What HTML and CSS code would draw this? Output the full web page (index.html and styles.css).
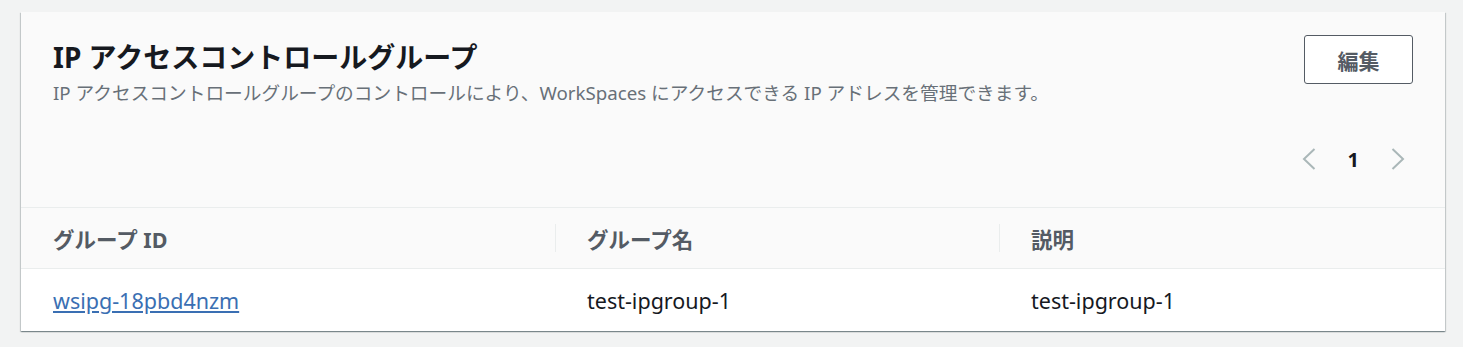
FILE: index.html
```html
<!DOCTYPE html>
<html lang="ja">
<head>
    <meta charset="UTF-8">
    <title>IP アクセスコントロールグループ</title>
    <link rel="stylesheet" href="styles.css">
</head>
<body>
    <div class="panel">
        <div class="panel-header">
            <div class="heading">
                <h2>IP アクセスコントロールグループ</h2>
                <p class="desc">IP アクセスコントロールグループのコントロールにより、WorkSpaces にアクセスできる IP アドレスを管理できます。</p>
            </div>
            <div class="actions">
                <button class="edit-btn">編集</button>
                <div class="pager">
                    <span class="chev">
                        <svg width="14" height="22" viewBox="0 0 14 22"><polyline points="12.5,1 2,11 12.5,21" fill="none" stroke="currentColor" stroke-width="2"/></svg>
                    </span>
                    <span class="page-num">1</span>
                    <span class="chev">
                        <svg width="14" height="22" viewBox="0 0 14 22"><polyline points="1.5,1 12,11 1.5,21" fill="none" stroke="currentColor" stroke-width="2"/></svg>
                    </span>
                </div>
            </div>
        </div>

        <div class="table">
            <div class="th">グループ ID</div>
            <div class="th sep">グループ名</div>
            <div class="th sep">説明</div>

            <div class="td"><a href="#">wsipg-18pbd4nzm</a></div>
            <div class="td">test-ipgroup-1</div>
            <div class="td">test-ipgroup-1</div>
        </div>
    </div>
</body>
</html>
```

FILE: styles.css
```css
body {
    margin: 0;
    padding: 12px 18px 15px 21px;
    background-color: #f2f3f3;
    font-family: "Noto Sans", "Noto Sans CJK JP", sans-serif;
    color: #16191f;
}
.panel {
    background-color: white;
    box-shadow: 0 1px 1px 0 rgba(0,28,36,0.3), 1px 1px 1px 0 rgba(0,28,36,0.15), -1px 1px 1px 0 rgba(0,28,36,0.15);
}
.panel-header {
    display: flex;
    justify-content: space-between;
    background-color: #fafafa;
    padding: 23px 32px 0 32px;
    height: 172px;
    border-bottom: 1px solid #eaeded;
}
h2 {
    margin: 0;
    font-size: 28px;
    font-weight: bold;
    line-height: 44px;
}
.desc {
    margin: 0;
    font-size: 18.7px;
    color: #687078;
    line-height: 28px;
}
.actions {
    display: flex;
    flex-direction: column;
    align-items: flex-end;
}
.edit-btn {
    width: 109px;
    height: 49px;
    background-color: white;
    border: 1px solid #545b64;
    border-radius: 3px;
    font-family: inherit;
    font-size: 21px;
    font-weight: bold;
    color: #545b64;
    cursor: pointer;
}
.pager {
    display: flex;
    align-items: center;
    gap: 32px;
    margin-top: 63px;
    margin-right: 8px;
    height: 24px;
}
.chev {
    display: flex;
    color: #aab7b8;
}
.page-num {
    font-size: 20px;
    font-weight: bold;
}
.table {
    display: grid;
    grid-template-columns: 534px 444px 1fr;
}
.th {
    display: flex;
    align-items: center;
    height: 60px;
    padding-left: 32px;
    background-color: #fafafa;
    border-bottom: 1px solid #eaeded;
    font-size: 21.5px;
    font-weight: bold;
    color: #545b64;
    position: relative;
}
.th.sep::before {
    content: "";
    position: absolute;
    left: 0;
    top: 16px;
    bottom: 16px;
    border-left: 1px solid #eaeded;
}
.td {
    display: flex;
    align-items: center;
    height: 62px;
    padding-left: 32px;
    font-size: 21.5px;
}
.td a {
    color: #3a6fb3;
}
```
